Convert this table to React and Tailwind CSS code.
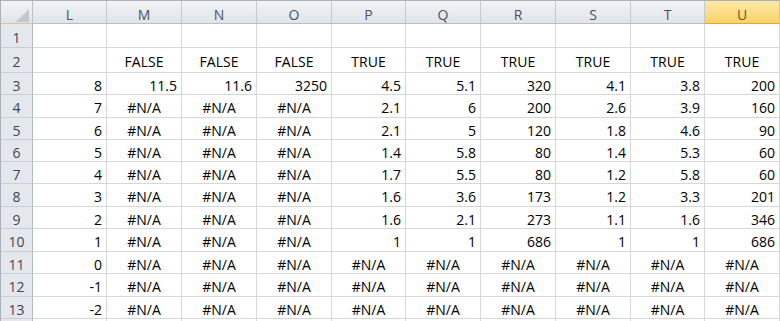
import React from "react";

const cols = ["L", "M", "N", "O", "P", "Q", "R", "S", "T", "U"];
const colW = { L: "w-[74px]", M: "w-[75px]", N: "w-[75px]", O: "w-[75px]", P: "w-[74px]", Q: "w-[75px]", R: "w-[75px]", S: "w-[75px]", T: "w-[74px]", U: "w-[75px]" };
const hMap = { 22: "h-[22px]", 23: "h-[23px]", 24: "h-[24px]", 25: "h-[25px]" };
const heights = [24, 25, 22, 23, 22, 22, 22, 23, 22, 23, 22, 23, 22, 22];

const NA = "#N/A";
const data = [
  ["", "", "", "", "", "", "", "", "", ""],
  ["", "FALSE", "FALSE", "FALSE", "TRUE", "TRUE", "TRUE", "TRUE", "TRUE", "TRUE"],
  [8, 11.5, 11.6, 3250, 4.5, 5.1, 320, 4.1, 3.8, 200],
  [7, NA, NA, NA, 2.1, 6, 200, 2.6, 3.9, 160],
  [6, NA, NA, NA, 2.1, 5, 120, 1.8, 4.6, 90],
  [5, NA, NA, NA, 1.4, 5.8, 80, 1.4, 5.3, 60],
  [4, NA, NA, NA, 1.7, 5.5, 80, 1.2, 5.8, 60],
  [3, NA, NA, NA, 1.6, 3.6, 173, 1.2, 3.3, 201],
  [2, NA, NA, NA, 1.6, 2.1, 273, 1.1, 1.6, 346],
  [1, NA, NA, NA, 1, 1, 686, 1, 1, 686],
  [0, NA, NA, NA, NA, NA, NA, NA, NA, NA],
  [-1, NA, NA, NA, NA, NA, NA, NA, NA, NA],
  [-2, NA, NA, NA, NA, NA, NA, NA, NA, NA],
  ["", "", "", "", "", "", "", "", "", ""],
];

export default function App() {
  return (
    <div
      className="w-[780px] h-[321px] overflow-hidden bg-white text-[14px] leading-[19px] text-black"
      style={{ fontFamily: '"Open Sans", "Liberation Sans", sans-serif' }}
    >
      {/* header row */}
      <div className="flex h-[24px]">
        <div className="relative w-[33px] h-[24px] border-t border-l border-r border-b border-t-[#a9b0b9] border-l-[#a9b0b9] border-r-[#b9c0c9] border-b-[#d8c79c] bg-gradient-to-b from-[#f1f3f6] to-[#e0e4e9]">
          <svg className="absolute left-[15px] top-[8px]" width="13" height="13" viewBox="0 0 13 13">
            <polygon points="13,0 13,13 0,13" fill="#c3c8cf" />
          </svg>
        </div>
        {cols.map((c) => {
          const sel = c === "U";
          return (
            <div
              key={c}
              className={
                colW[c] +
                " h-[24px] flex items-center justify-center pt-[5px] border-t border-r border-b border-t-[#a9b0b9] " +
                (sel
                  ? "bg-gradient-to-b from-[#fde9a6] to-[#f8d265] border-r-[#e9c46a] border-b-[#e2a93a] text-[#6b5826]"
                  : "bg-gradient-to-b from-[#f1f3f6] to-[#e0e4e9] border-r-[#c3c9d1] border-b-[#b7bec8] text-[#4a5260]")
              }
            >
              {c}
            </div>
          );
        })}
      </div>
      {data.map((row, ri) => {
        const h = hMap[heights[ri]];
        return (
          <div key={ri} className={"flex " + h}>
            <div
              className={
                "w-[33px] " +
                h +
                " flex items-center justify-center pt-[3px] border-l border-r border-b border-l-[#a9b0b9] border-r-[#b3bac4] border-b-[#c9ced6] bg-[#e4e7ec] text-[#3e4654]"
              }
            >
              {ri < 13 ? ri + 1 : ""}
            </div>
            {row.map((v, ci) => {
              const isNum = typeof v === "number";
              return (
                <div
                  key={ci}
                  className={
                    colW[cols[ci]] +
                    " " +
                    h +
                    " flex items-center pt-[3px] border-r border-b border-[#d6d6d6] " +
                    (isNum ? "justify-end pr-[4px]" : "justify-center")
                  }
                >
                  {v === "" ? "" : String(v)}
                </div>
              );
            })}
          </div>
        );
      })}
    </div>
  );
}
